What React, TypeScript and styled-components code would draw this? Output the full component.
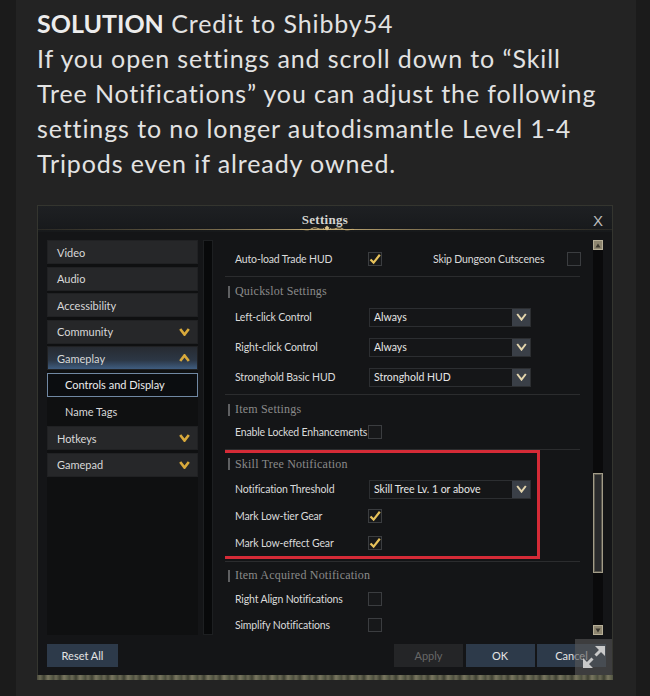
import React from "react";
import styled, { createGlobalStyle } from "styled-components";

const GlobalStyle = createGlobalStyle`
    html, body {
        margin: 0;
        padding: 0;
        background: #1b1b1b;
    }
    * {
        box-sizing: border-box;
    }
`;

const Page = styled.div`
    width: 650px;
    height: 696px;
    overflow: hidden;
    padding-left: 16px;
    background: #1b1b1b;
`;

const Card = styled.div`
    width: 620px;
    height: 696px;
    background: #232323;
    padding-left: 21px;
`;

const Post = styled.p`
    margin: 0;
    padding-top: 6px;
    font-family: Lato, "Liberation Sans", sans-serif;
    font-size: 25px;
    line-height: 35px;
    letter-spacing: 0.9px;
    color: #e2e2e2;
    white-space: nowrap;
    strong {
        font-weight: 700;
        letter-spacing: 0;
        color: #ececec;
    }
`;

const Window = styled.div`
    position: relative;
    margin-top: 24px;
    width: 576px;
    height: 475px;
    border: 1px solid #34352f;
    border-bottom: none;
    background: #141517;
    display: flex;
    flex-direction: column;
    font-family: Lato, "Liberation Sans", sans-serif;
`;

const TitleBar = styled.div`
    height: 26px;
    background: linear-gradient(to bottom, #1e2023, #17191b);
    display: flex;
    flex-direction: column;
`;

const TitleRow = styled.div`
    height: 19px;
    display: grid;
    grid-template-columns: 1fr auto 1fr;
    align-items: center;
`;

const Title = styled.div`
    grid-column: 2;
    font-family: "Liberation Serif", serif;
    font-weight: 700;
    font-size: 13px;
    color: #d4d4d0;
    padding-top: 5px;
    letter-spacing: 0.3px;
`;

const Close = styled.div`
    justify-self: end;
    margin-right: 9px;
    padding-top: 6px;
    font-family: "Liberation Sans", sans-serif;
    font-size: 15px;
    color: #bdbdbd;
`;

const Body = styled.div`
    display: grid;
    grid-template-columns: 151px 10px 370px 10px;
    column-gap: 5px;
    padding: 8px 0 0 9px;
    height: 403px;
    & > :nth-child(3) {
        margin-left: 7px;
    }
`;

const Nav = styled.div`
    height: 395px;
    background: #0f1011;
    display: flex;
    flex-direction: column;
    gap: 2.6px;
`;

const NavItem = styled.div<{ $kind?: "open" | "selected" | "sub" }>`
    flex-shrink: 0;
    height: 24px;
    display: flex;
    align-items: center;
    justify-content: space-between;
    padding: 0 7px 0 ${(p) => (p.$kind === "selected" || p.$kind === "sub" ? 17 : 9)}px;
    font-size: 11px;
    color: #d8d8d8;
    background: ${(p) =>
        p.$kind === "open"
            ? "linear-gradient(to bottom, #272b31 0%, #2c3745 60%, #3f5d80 100%)"
            : p.$kind === "selected"
            ? "#0b0d10"
            : p.$kind === "sub"
            ? "transparent"
            : "#262729"};
    border: 1px solid ${(p) => (p.$kind === "selected" ? "#7088a3" : p.$kind === "sub" ? "transparent" : "#202123")};
    ${(p) => p.$kind === "selected" && "color: #ececec;"}
`;

const Track = styled.div`
    height: 395px;
    background: #08090a;
    border: 1px solid #1d1f21;
`;

const Content = styled.div`
    height: 395px;
    overflow: hidden;
    padding-top: 6px;
    display: flex;
    flex-direction: column;
    & > * {
        flex-shrink: 0;
    }
`;

const Row = styled.div<{ $h: number }>`
    flex-shrink: 0;
    height: ${(p) => p.$h}px;
    display: grid;
    grid-template-columns: 133px 65px 134px auto;
    align-items: center;
    padding-left: 10px;
`;

const Label = styled.span`
    font-size: 10.5px;
    letter-spacing: -0.15px;
    color: #dadada;
    white-space: nowrap;
`;

const Divider = styled.div<{ $top: number; $bottom: number }>`
    height: 1px;
    background: #2b2c2e;
    margin: ${(p) => p.$top}px 8px ${(p) => p.$bottom}px 0;
`;

const Section = styled.div<{ $h: number }>`
    flex-shrink: 0;
    height: ${(p) => p.$h}px;
    display: flex;
    align-items: center;
    gap: 5px;
    padding-left: 3px;
    font-family: "Liberation Serif", serif;
    font-size: 12px;
    letter-spacing: 0.2px;
    color: #8a8a8a;
    &::before {
        content: "";
        width: 2px;
        height: 12px;
        background: #5f6062;
    }
`;

const Highlight = styled.div`
    width: 320px;
    margin-left: -5px;
    border: 3px solid #d52b37;
    padding-left: 2px;
    display: flex;
    flex-direction: column;
`;

const Box = styled.div`
    width: 14px;
    height: 14px;
    border: 1px solid #3b3d40;
    background: #17181a;
    display: flex;
    align-items: center;
    justify-content: center;
`;

const SelectBox = styled.div`
    width: 162px;
    height: 19px;
    margin-left: 1px;
    background: #151618;
    border: 1px solid #2c2e31;
    display: flex;
    align-items: stretch;
    justify-content: space-between;
    font-size: 10.5px;
    color: #e6e6e6;
`;

const SelectText = styled.span`
    padding-left: 4px;
    display: flex;
    align-items: center;
`;

const SelectButton = styled.span`
    width: 18px;
    background: #3a3f47;
    display: flex;
    align-items: center;
    justify-content: center;
`;

const Scrollbar = styled.div`
    height: 395px;
    display: flex;
    flex-direction: column;
    align-items: center;
    background: #0a0a0b;
`;

const ArrowBtn = styled.div`
    width: 10px;
    height: 10px;
    background: #8e8670;
    border: 1px solid #b7af97;
    display: flex;
    align-items: center;
    justify-content: center;
`;

const ScrollTrack = styled.div`
    flex: 1;
    width: 10px;
    display: flex;
    flex-direction: column;
    padding-top: 223px;
`;

const Thumb = styled.div`
    height: 100px;
    background: #2a2b2d;
    border: 1px solid #a29c88;
    box-shadow: inset 0 0 0 1px #5a574e;
`;

const Footer = styled.div`
    display: flex;
    justify-content: space-between;
    align-items: center;
    padding: 0 6px 0 9px;
    height: 40px;
`;

const ButtonGroup = styled.div`
    display: flex;
    gap: 2.5px;
`;

const Button = styled.div<{ $variant: "slate" | "muted"; $w: number }>`
    width: ${(p) => p.$w}px;
    height: 23px;
    display: flex;
    align-items: center;
    justify-content: center;
    font-size: 11px;
    background: ${(p) => (p.$variant === "slate" ? "#2d3a4a" : "#242527")};
    color: ${(p) => (p.$variant === "slate" ? "#e4e4e4" : "#686868")};
`;

const Expand = styled.div`
    position: absolute;
    right: 0;
    bottom: 5px;
    width: 37px;
    height: 36px;
    background: rgba(88, 88, 88, 0.6);
    display: flex;
    align-items: center;
    justify-content: center;
`;

const FrameEdge = styled.div`
    height: 5px;
    margin: 0 -1px;
    background: repeating-linear-gradient(
        90deg,
        #4a4a3c 0px,
        #6b6a55 3px,
        #3e4032 7px,
        #7a7760 11px,
        #4f5340 16px
    );
`;

const Chevron = ({ up = false, color = "#d8a93b", width = 2.6 }: { up?: boolean; color?: string; width?: number }) => (
    <svg width="11" height="8" viewBox="0 0 11 8">
        <path
            d={up ? "M1.2 7 L5.5 1.4 L9.8 7" : "M1.2 1 L5.5 6.6 L9.8 1"}
            fill="none"
            stroke={color}
            strokeWidth={width}
            strokeLinejoin="miter"
        />
    </svg>
);

const Check = ({ on }: { on?: boolean }) => (
    <Box>
        {on && (
            <svg width="12" height="12" viewBox="0 0 12 12">
                <path d="M1.5 6.5 L4.6 9.6 L10.8 1.8" fill="none" stroke="#e7c25b" strokeWidth="2.2" />
            </svg>
        )}
    </Box>
);

const Select = ({ value }: { value: string }) => (
    <SelectBox>
        <SelectText>{value}</SelectText>
        <SelectButton>
            <Chevron color="#e3d5ad" width={2} />
        </SelectButton>
    </SelectBox>
);

const Ornament = () => (
    <svg width="574" height="7" viewBox="0 0 574 7" style={{ display: "block" }}>
        <defs>
            <linearGradient id="gold" x1="0" x2="1" y1="0" y2="0">
                <stop offset="0" stopColor="#6d6245" stopOpacity="0.2" />
                <stop offset="0.3" stopColor="#8a7a55" stopOpacity="0.8" />
                <stop offset="0.5" stopColor="#cdb47c" />
                <stop offset="0.7" stopColor="#8a7a55" stopOpacity="0.8" />
                <stop offset="1" stopColor="#6d6245" stopOpacity="0.2" />
            </linearGradient>
        </defs>
        <rect x="0" y="4" width="574" height="1" fill="url(#gold)" />
        <path d="M289 0.5 L291.5 3 L289 5.5 L286.5 3 Z" fill="#d8c08a" />
        <path
            d="M286 3.5 C282 6 278 1 274 3.5 C270 6 266 4 262 4.5 M292 3.5 C296 6 300 1 304 3.5 C308 6 312 4 316 4.5"
            fill="none"
            stroke="#c9ae74"
            strokeWidth="1"
        />
    </svg>
);

const Triangle = ({ up }: { up?: boolean }) => (
    <svg width="6" height="5" viewBox="0 0 6 5">
        <path d={up ? "M3 0.5 L5.5 4.5 L0.5 4.5 Z" : "M0.5 0.5 L5.5 0.5 L3 4.5 Z"} fill="#3a372e" />
    </svg>
);

const ExpandIcon = () => (
    <svg width="26" height="26" viewBox="0 0 26 26">
        <path d="M14 2 H24 V12 Z M2 14 V24 H12 Z" fill="#c9c9c9" />
        <path d="M19.5 6.5 L14.5 11.5 M6.5 19.5 L11.5 14.5" stroke="#c9c9c9" strokeWidth="3" />
    </svg>
);

const navItems: { label: string; kind?: "open" | "selected" | "sub"; arrow?: "down" | "up" }[] = [
    { label: "Video" },
    { label: "Audio" },
    { label: "Accessibility" },
    { label: "Community", arrow: "down" },
    { label: "Gameplay", kind: "open", arrow: "up" },
    { label: "Controls and Display", kind: "selected" },
    { label: "Name Tags", kind: "sub" },
    { label: "Hotkeys", arrow: "down" },
    { label: "Gamepad", arrow: "down" },
];

export default function App() {
    return (
        <>
            <GlobalStyle />
            <Page>
                <Card>
                    <Post>
                        <strong>SOLUTION</strong> Credit to Shibby54
                        <br />
                        If you open settings and scroll down to “Skill
                        <br />
                        Tree Notifications” you can adjust the following
                        <br />
                        settings to no longer autodismantle Level 1-4
                        <br />
                        Tripods even if already owned.
                    </Post>
                    <Window>
                        <TitleBar>
                            <TitleRow>
                                <Title>Settings</Title>
                                <Close>X</Close>
                            </TitleRow>
                            <Ornament />
                        </TitleBar>
                        <Body>
                            <Nav>
                                {navItems.map((item) => (
                                    <NavItem key={item.label} $kind={item.kind}>
                                        <span>{item.label}</span>
                                        {item.arrow && <Chevron up={item.arrow === "up"} />}
                                    </NavItem>
                                ))}
                            </Nav>
                            <Track />
                            <Content>
                                <Row $h={26}>
                                    <Label>Auto-load Trade HUD</Label>
                                    <Check on />
                                    <Label>Skip Dungeon Cutscenes</Label>
                                    <Check />
                                </Row>
                                <Divider $top={4} $bottom={4} />
                                <Section $h={21}>Quickslot Settings</Section>
                                <Row $h={30}>
                                    <Label>Left-click Control</Label>
                                    <Select value="Always" />
                                </Row>
                                <Row $h={30}>
                                    <Label>Right-click Control</Label>
                                    <Select value="Always" />
                                </Row>
                                <Row $h={30}>
                                    <Label>Stronghold Basic HUD</Label>
                                    <Select value="Stronghold HUD" />
                                </Row>
                                <Divider $top={2} $bottom={4} />
                                <Section $h={21}>Item Settings</Section>
                                <Row $h={24}>
                                    <Label>Enable Locked Enhancements</Label>
                                    <Check />
                                </Row>
                                <Divider $top={5} $bottom={0} />
                                <Highlight>
                                    <Section $h={22}>Skill Tree Notification</Section>
                                    <Row $h={28}>
                                        <Label>Notification Threshold</Label>
                                        <Select value="Skill Tree Lv. 1 or above" />
                                    </Row>
                                    <Row $h={26.5}>
                                        <Label>Mark Low-tier Gear</Label>
                                        <Check on />
                                    </Row>
                                    <Row $h={26.5}>
                                        <Label>Mark Low-effect Gear</Label>
                                        <Check on />
                                    </Row>
                                </Highlight>
                                <Divider $top={2} $bottom={3} />
                                <Section $h={21}>Item Acquired Notification</Section>
                                <Row $h={26}>
                                    <Label>Right Align Notifications</Label>
                                    <Check />
                                </Row>
                                <Row $h={26}>
                                    <Label>Simplify Notifications</Label>
                                    <Check />
                                </Row>
                            </Content>
                            <Scrollbar>
                                <ArrowBtn>
                                    <Triangle up />
                                </ArrowBtn>
                                <ScrollTrack>
                                    <Thumb />
                                </ScrollTrack>
                                <ArrowBtn>
                                    <Triangle />
                                </ArrowBtn>
                            </Scrollbar>
                        </Body>
                        <Footer>
                            <Button $variant="slate" $w={71}>
                                Reset All
                            </Button>
                            <ButtonGroup>
                                <Button $variant="muted" $w={69}>
                                    Apply
                                </Button>
                                <Button $variant="slate" $w={69}>
                                    OK
                                </Button>
                                <Button $variant="slate" $w={69}>
                                    Cancel
                                </Button>
                            </ButtonGroup>
                        </Footer>
                        <FrameEdge />
                        <Expand>
                            <ExpandIcon />
                        </Expand>
                    </Window>
                </Card>
            </Page>
        </>
    );
}
